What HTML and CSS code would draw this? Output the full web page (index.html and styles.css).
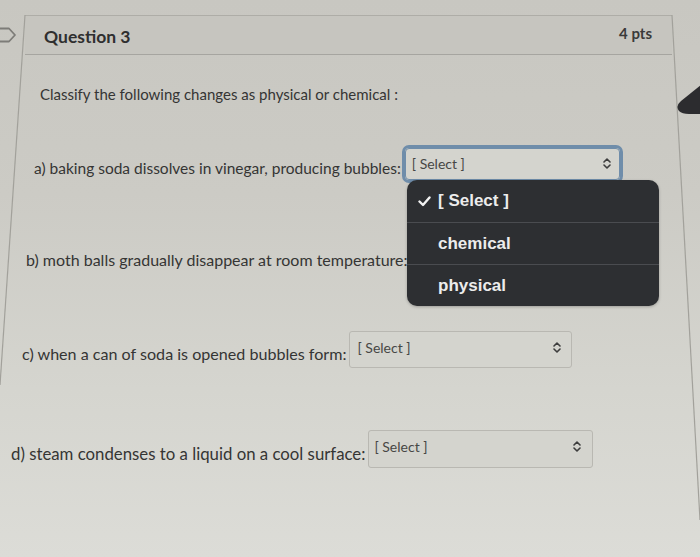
FILE: index.html
```html
<!DOCTYPE html>
<html lang="en">
<head>
<meta charset="utf-8">
<title>Question 3</title>
<link rel="stylesheet" href="styles.css">
</head>
<body>
<div class="page">
  <svg class="edges" width="700" height="557" viewBox="0 0 700 557" aria-hidden="true">
    <line x1="25" y1="15" x2="0" y2="385" />
    <line x1="672" y1="15" x2="700" y2="520" />
  </svg>
  <svg class="tab" width="20" height="18" viewBox="0 0 20 18" aria-hidden="true">
    <path d="M-4 2.5 H9 L15 9 L9 15.5 H-4" />
  </svg>
  <svg class="blob" width="26" height="32" viewBox="0 0 26 32" aria-hidden="true">
    <path d="M26 0 L6 16 Q0 21 4 26 Q7 29 14 29 L26 29 Z" />
  </svg>

  <section class="card">
    <header class="q-header">
      <h2 class="q-title">Question 3</h2>
      <span class="q-pts">4 pts</span>
    </header>
    <div class="q-body">
      <p class="intro">Classify the following changes as physical or chemical :</p>

      <div class="row row-a">
        <span class="label">a) baking soda dissolves in vinegar, producing bubbles:</span>
        <div class="select select-a is-focused">
          <span class="select-text">[ Select ]</span>
          <svg class="chev" width="8" height="11" viewBox="0 0 8 11"><path d="M1 4 L4 1 L7 4 M1 7 L4 10 L7 7"/></svg>
        </div>
      </div>

      <div class="row row-b">
        <span class="label">b) moth balls gradually disappear at room temperature:</span>
        <div class="select select-b">
          <span class="select-text">[ Select ]</span>
          <svg class="chev" width="8" height="11" viewBox="0 0 8 11"><path d="M1 4 L4 1 L7 4 M1 7 L4 10 L7 7"/></svg>
        </div>
      </div>

      <div class="row row-c">
        <span class="label">c) when a can of soda is opened bubbles form:</span>
        <div class="select select-c">
          <span class="select-text">[ Select ]</span>
          <svg class="chev" width="8" height="11" viewBox="0 0 8 11"><path d="M1 4 L4 1 L7 4 M1 7 L4 10 L7 7"/></svg>
        </div>
      </div>

      <div class="row row-d">
        <span class="label">d) steam condenses to a liquid on a cool surface:</span>
        <div class="select select-d">
          <span class="select-text">[ Select ]</span>
          <svg class="chev" width="8" height="11" viewBox="0 0 8 11"><path d="M1 4 L4 1 L7 4 M1 7 L4 10 L7 7"/></svg>
        </div>
      </div>
    </div>
  </section>

  <ul class="menu">
    <li class="menu-item is-selected">
      <svg class="check" width="13" height="11" viewBox="0 0 13 11"><path d="M1.5 5.5 L5 9 L11.5 1.5"/></svg>
      <span>[ Select ]</span>
    </li>
    <li class="menu-item"><span>chemical</span></li>
    <li class="menu-item"><span>physical</span></li>
  </ul>
</div>
</body>
</html>
```

FILE: styles.css
```css
* { box-sizing: border-box; }

html, body {
  margin: 0;
  padding: 0;
}

body {
  width: 700px;
  height: 557px;
  overflow: hidden;
  font-family: Lato, "Open Sans", "Liberation Sans", sans-serif;
  color: #353534;
}

.page {
  position: relative;
  width: 700px;
  height: 557px;
  padding-top: 15px;
  background: linear-gradient(180deg, #c8c7c1 0%, #cccbc5 35%, #d5d5cf 70%, #dcdcd7 100%);
}

.edges {
  position: absolute;
  left: 0;
  top: 0;
  pointer-events: none;
}
.edges line {
  stroke: #a2a19b;
  stroke-width: 1.2;
}

.tab {
  position: absolute;
  left: 0;
  top: 26px;
}
.tab path {
  fill: none;
  stroke: #7d7c78;
  stroke-width: 1.8;
  stroke-linejoin: round;
}

.blob {
  position: absolute;
  left: 675px;
  top: 85px;
}
.blob path {
  fill: #2c2c2f;
}

.card {
  width: 700px;
}

.q-header {
  margin: 0 28px 0 25px;
  height: 40px;
  padding: 0 20px 2px 19px;
  display: flex;
  align-items: center;
  justify-content: space-between;
  border-top: 1px solid #aeada7;
  border-bottom: 1px solid #a6a5a0;
  background: #c6c5bf;
}

.q-title {
  margin: 0;
  font-size: 17.5px;
  font-weight: 700;
  color: #2f2f2f;
  padding-top: 4px;
}

.q-pts {
  font-size: 15px;
  font-weight: 700;
  color: #3a3a3a;
  padding-bottom: 2px;
}

.q-body {
  padding-top: 29px;
}

.intro {
  margin: 0;
  padding-left: 40px;
  height: 20px;
  line-height: 20px;
  font-size: 15px;
}

.row {
  display: flex;
  align-items: center;
  gap: 3px;
}

.label {
  white-space: nowrap;
  line-height: 20px;
}

.row-a { margin-top: 44px; height: 32px; padding-left: 34px; }
.row-a .label { font-size: 15.5px; padding-top: 7px; }

.row-b { margin-top: 61px; height: 37px; padding-left: 26px; }
.row-b .label { font-size: 16px; padding-top: 1px; }

.row-c { margin-top: 53px; height: 37px; padding-left: 22px; }
.row-c .label { font-size: 16.1px; padding-top: 9px; }

.row-d { margin-top: 62px; height: 38px; padding-left: 11px; }
.row-d .label { font-size: 16.8px; padding-top: 9px; }

.select {
  height: 100%;
  display: flex;
  align-items: center;
  justify-content: space-between;
  border: 1px solid #b9b8b2;
  border-radius: 3px;
  background: #d4d4ce;
  color: #474745;
  font-size: 14px;
}

.select-a { width: 215px; padding: 0 8px 2px 6px; margin-left: 1px; }
.select-b { width: 222px; padding: 0 10px 0 6px; }
.select-c { width: 223px; padding: 0 10px 4px 7px; }
.select-d { width: 225px; padding: 0 11px 6px 5px; }

.select.is-focused {
  outline: 3px solid #6f8daa;
  outline-offset: 0;
  border-color: #6f8daa;
  border-radius: 4px;
}

.chev path {
  fill: none;
  stroke: #3d3d3d;
  stroke-width: 1.6;
  stroke-linecap: round;
  stroke-linejoin: round;
}

.menu {
  position: absolute;
  left: 407px;
  top: 180px;
  width: 252px;
  height: 126px;
  margin: 0;
  padding: 0;
  list-style: none;
  background: #2d2f32;
  border-radius: 10px;
  box-shadow: 0 1px 3px rgba(0, 0, 0, 0.25);
  overflow: hidden;
}

.menu-item {
  height: 42px;
  display: flex;
  align-items: center;
  padding-left: 31px;
  font-family: "Liberation Sans", Arial, sans-serif;
  font-size: 17px;
  font-weight: 700;
  color: #ececec;
  border-top: 1px solid #4a4c50;
}
.menu-item:first-child { border-top: 0; }

.menu-item.is-selected {
  padding-left: 11px;
  gap: 7px;
}

.check path {
  fill: none;
  stroke: #f2f2f2;
  stroke-width: 2.4;
  stroke-linecap: round;
  stroke-linejoin: round;
}
```
